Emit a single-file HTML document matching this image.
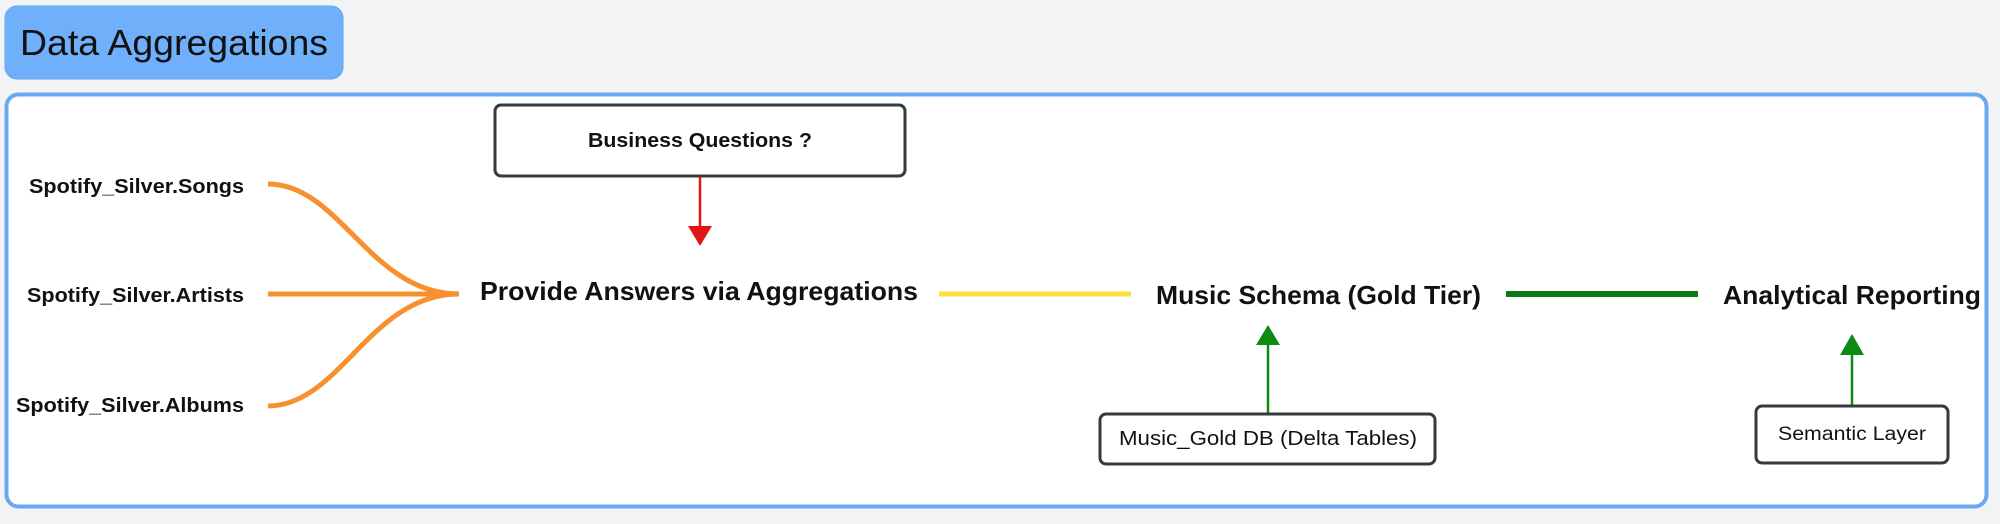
<!DOCTYPE html>
<html><head><meta charset="utf-8"><style>
html,body{margin:0;padding:0;background:#f2f3f5;}
svg{display:block;}
text{font-family:"Liberation Sans",Arial,sans-serif;fill:#111;}
</style></head><body>
<svg width="2000" height="524" viewBox="0 0 2000 524" xmlns="http://www.w3.org/2000/svg">
<rect x="0" y="0" width="2000" height="524" fill="#f2f3f5"/>
<rect x="5" y="6" width="338" height="73" rx="12" fill="#70b0fb" stroke="#64a4f0" stroke-width="1"/>
<text x="20" y="55" font-size="36" textLength="308" lengthAdjust="spacingAndGlyphs">Data Aggregations</text>
<rect x="6.5" y="94.5" width="1980" height="412" rx="12" fill="#fff" stroke="#6aa8f2" stroke-width="4"/>
<rect x="495" y="105" width="410" height="71" rx="6" fill="#fff" stroke="#343a40" stroke-width="3"/>
<text x="700" y="147" font-size="20" font-weight="bold" text-anchor="middle" textLength="224" lengthAdjust="spacingAndGlyphs">Business Questions ?</text>
<line x1="700" y1="177" x2="700" y2="228" stroke="#e31414" stroke-width="2.5"/>
<polygon points="688,226 712,226 700,246" fill="#e31414"/>
<g font-size="20" font-weight="bold" text-anchor="end">
<text x="244" y="193" textLength="215" lengthAdjust="spacingAndGlyphs">Spotify_Silver.Songs</text>
<text x="244" y="302" textLength="217" lengthAdjust="spacingAndGlyphs">Spotify_Silver.Artists</text>
<text x="244" y="412" textLength="228" lengthAdjust="spacingAndGlyphs">Spotify_Silver.Albums</text>
</g>
<g fill="none" stroke="#f7902e" stroke-width="5">
<path d="M268,184 C340,184 370,294 459,294"/>
<path d="M268,294 L459,294"/>
<path d="M268,406 C340,406 370,294 459,294"/>
</g>
<text x="480" y="300" font-size="26" font-weight="bold" textLength="438" lengthAdjust="spacingAndGlyphs">Provide Answers via Aggregations</text>
<line x1="939" y1="294" x2="1131" y2="294" stroke="#fde03a" stroke-width="5"/>
<text x="1156" y="304" font-size="26" font-weight="bold" textLength="325" lengthAdjust="spacingAndGlyphs">Music Schema (Gold Tier)</text>
<line x1="1506" y1="294" x2="1698" y2="294" stroke="#0b7a14" stroke-width="6"/>
<text x="1723" y="304" font-size="26" font-weight="bold" textLength="258" lengthAdjust="spacingAndGlyphs">Analytical Reporting</text>
<line x1="1268" y1="413" x2="1268" y2="343" stroke="#0b8a14" stroke-width="2.5"/>
<polygon points="1256,345 1280,345 1268,325" fill="#0b8a14"/>
<line x1="1852" y1="405" x2="1852" y2="353" stroke="#0b8a14" stroke-width="2.5"/>
<polygon points="1840,355 1864,355 1852,334" fill="#0b8a14"/>
<rect x="1100" y="414" width="335" height="50" rx="6" fill="#fff" stroke="#343a40" stroke-width="3"/>
<text x="1268" y="445" font-size="20" text-anchor="middle" textLength="298" lengthAdjust="spacingAndGlyphs">Music_Gold DB (Delta Tables)</text>
<rect x="1756" y="406" width="192" height="57" rx="6" fill="#fff" stroke="#343a40" stroke-width="3"/>
<text x="1852" y="440" font-size="19" text-anchor="middle" textLength="148" lengthAdjust="spacingAndGlyphs">Semantic Layer</text>
</svg>
</body></html>
